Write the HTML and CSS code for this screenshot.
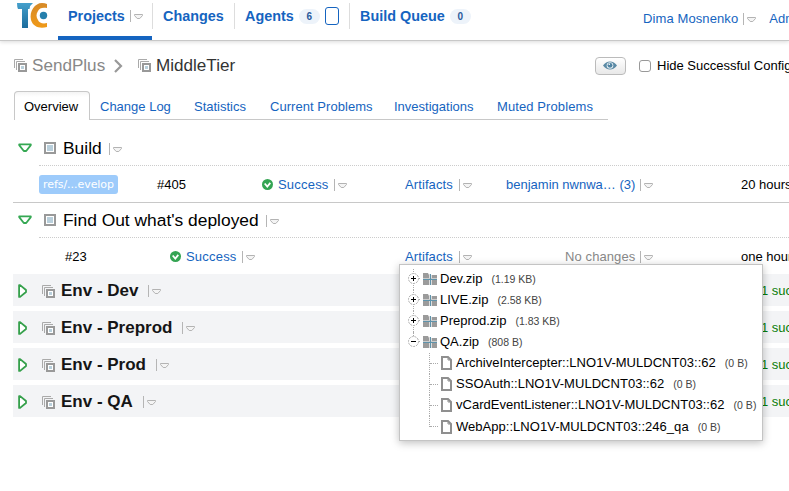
FILE: index.html
```html
<!DOCTYPE html>
<html lang="en">
<head>
    <meta charset="UTF-8">
    <meta name="viewport" content="width=device-width, initial-scale=1.0">
    <title>MiddleTier - Overview</title>
    <link rel="stylesheet" href="styles.css">
</head>
<body>
    <!-- Shared icons -->
    <svg class="sprite" aria-hidden="true">
        <symbol id="menu" viewBox="0 0 13 12">
            <path d="M.5 0v12" stroke="#b5b5b5"/>
            <path d="M4.5 4.5h8v1L9.8 8.5H7.2L4.5 5.5z" fill="#f4f4f4" stroke="#b3b3b3" stroke-linejoin="round"/>
        </symbol>
        <symbol id="project" viewBox="0 0 13 13">
            <path d="M.5 9V.5H9M2.5 11V2.5H11" fill="none" stroke="#aaa"/>
            <path d="M5 5h7v7H5z" fill="#fff" stroke="#999" stroke-width="2"/>
            <path d="M7 7h3v3H7z" fill="#b9d0dc"/>
        </symbol>
        <symbol id="config" viewBox="0 0 12 12">
            <path d="M1 1h10v10H1z" fill="#fff" stroke="#999" stroke-width="2"/>
            <path d="M3 3h6v6H3z" fill="#b9cfdb"/>
        </symbol>
        <symbol id="open" viewBox="0 0 14 10">
            <path d="M1.2 1.3h11.6v.8L8.2 8H5.8L1.2 2.1z" fill="#fff" stroke="#35a853" stroke-width="1.8" stroke-linejoin="round"/>
        </symbol>
        <symbol id="closed" viewBox="0 0 10 14">
            <path d="M1.1 1.1h1L8 6v2l-5.9 4.9h-1z" fill="#fff" stroke="#35a04b" stroke-width="1.8" stroke-linejoin="round"/>
        </symbol>
        <symbol id="ok" viewBox="0 0 11 11">
            <circle cx="5.5" cy="5.5" r="5.5" fill="#34a453"/>
            <path d="M2.7 4.5l2.6 3 3-3.6" fill="none" stroke="#fff" stroke-width="1.8"/>
        </symbol>
        <symbol id="plus" viewBox="0 0 12 12">
            <circle cx="5.5" cy="5.5" r="5" fill="#fff" stroke="#aaa" stroke-dasharray="2 1"/>
            <path d="M3 5.5h5M5.5 3v5" stroke="#000"/>
            <path d="M11 5.5h1" stroke="#aaa"/>
        </symbol>
        <symbol id="minus" viewBox="0 0 12 12">
            <circle cx="5.5" cy="5.5" r="5" fill="#fff" stroke="#aaa" stroke-dasharray="2 1"/>
            <path d="M3 5.5h5" stroke="#000"/>
            <path d="M11 5.5h1" stroke="#aaa"/>
        </symbol>
        <symbol id="zip" viewBox="0 0 14 12">
            <path d="M0 0h5l1 2h8v10H0z" fill="#9b9b9b"/>
            <path d="M6.5 1v11M8.5 2v10" stroke="#ddd"/>
            <path d="M0 5.5h14" stroke="#ccc"/>
            <path d="M0 6.5h14M7.5 1v11" stroke="#5f93ab"/>
        </symbol>
        <symbol id="file" viewBox="0 0 11 14">
            <path d="M1 1h6l3 3v9H1z" fill="#fff" stroke="#8f8f8f" stroke-width="2"/>
            <path d="M7 1v3h3" fill="none" stroke="#8f8f8f"/>
        </symbol>
    </svg>

    <header class="header">
        <svg class="logo" viewBox="0 0 32 26">
            <defs>
                <linearGradient id="blue" x2="0" y2="1">
                    <stop offset="0" stop-color="#45a0cc"/>
                    <stop offset="1" stop-color="#1b6c9c"/>
                </linearGradient>
                <linearGradient id="orange" x2="0" y2="1">
                    <stop offset="0" stop-color="#d68a28"/>
                    <stop offset="1" stop-color="#f09a18"/>
                </linearGradient>
            </defs>
            <path d="M0 0h16q-3 2-3.500 6H11v19H5V6H1Q0 4 0 0z" fill="url(#blue)"/>
            <path d="M30 1v4c-4-1-8 0-9 3-2 3-2 6 0 9 1 3 5 4 9 3v4c-7 2-14 0-16-7-2-9 4-17 11-17q3 0 5 1z" fill="url(#orange)"/>
            <circle cx="26.500" cy="12.500" r="3.700" fill="#257fac"/>
        </svg>
        <nav class="nav">
            <div class="nav-item projects active"><a>Projects</a><svg class="menu"><use href="#menu"/></svg></div>
            <div class="nav-item changes"><a>Changes</a></div>
            <div class="nav-item agents"><a>Agents</a><span class="badge">6</span><span class="agent-box"></span></div>
            <div class="nav-item queue"><a>Build Queue</a><span class="badge">0</span></div>
        </nav>
        <div class="user"><a>Dima Mosnenko</a><svg class="menu"><use href="#menu"/></svg><a class="admin">Administration</a></div>
    </header>

    <div class="breadcrumbs">
        <svg class="project"><use href="#project"/></svg>
        <span class="crumb parent">SendPlus</span>
        <svg class="chevron" viewBox="0 0 9 14"><path d="M1 1l6 6-6 6" fill="none" stroke="#999" stroke-width="2.2"/></svg>
        <svg class="project"><use href="#project"/></svg>
        <span class="crumb">MiddleTier</span>
        <div class="actions">
            <button class="eye">
                <svg viewBox="0 0 14 9"><path d="M0 4.5Q3 .5 7 .5t7 4Q11 8.5 7 8.5T0 4.5z" fill="#5b8aa5"/><circle cx="7" cy="4.5" r="3.3" fill="#dfe9ee"/><circle cx="7" cy="4.3" r="2.4" fill="#4f83a2"/><circle cx="6.3" cy="3.3" r=".8" fill="#fff"/></svg>
            </button>
            <span class="checkbox"></span>
            <span>Hide Successful Configurations</span>
        </div>
    </div>

    <div class="tabs">
        <span class="tab current">Overview</span>
        <a class="tab changelog">Change Log</a>
        <a class="tab statistics">Statistics</a>
        <a class="tab problems">Current Problems</a>
        <a class="tab investigations">Investigations</a>
        <a class="tab muted">Muted Problems</a>
    </div>

    <main class="content">
        <section class="build-type">
            <div class="title">
                <svg class="open"><use href="#open"/></svg>
                <svg class="config"><use href="#config"/></svg>
                <span class="name">Build</span>
                <svg class="menu"><use href="#menu"/></svg>
            </div>
            <div class="build">
                <div class="col-branch"><span class="branch">refs/...evelop</span></div>
                <div class="col-number">#405</div>
                <div class="col-status"><svg class="ok"><use href="#ok"/></svg><a>Success</a><svg class="menu"><use href="#menu"/></svg></div>
                <div class="col-artifacts"><a>Artifacts</a><svg class="menu"><use href="#menu"/></svg></div>
                <div class="col-changes"><a>benjamin nwnwa… (3)</a><svg class="menu"><use href="#menu"/></svg></div>
                <div class="col-time">20 hours ago</div>
            </div>
        </section>

        <section class="build-type">
            <div class="title">
                <svg class="open"><use href="#open"/></svg>
                <svg class="config"><use href="#config"/></svg>
                <span class="name find">Find Out what's deployed</span>
                <svg class="menu"><use href="#menu"/></svg>
            </div>
            <div class="build no-branch">
                <div class="col-number">#23</div>
                <div class="col-status"><svg class="ok"><use href="#ok"/></svg><a>Success</a><svg class="menu"><use href="#menu"/></svg></div>
                <div class="col-artifacts">
                    <a>Artifacts</a><svg class="menu"><use href="#menu"/></svg>
                    <div class="popup">
                        <div class="node"><svg class="toggle"><use href="#plus"/></svg><svg class="zip"><use href="#zip"/></svg><span>Dev.zip</span><small>(1.19 KB)</small></div>
                        <div class="node"><svg class="toggle"><use href="#plus"/></svg><svg class="zip"><use href="#zip"/></svg><span>LIVE.zip</span><small>(2.58 KB)</small></div>
                        <div class="node"><svg class="toggle"><use href="#plus"/></svg><svg class="zip"><use href="#zip"/></svg><span>Preprod.zip</span><small>(1.83 KB)</small></div>
                        <div class="node last"><svg class="toggle"><use href="#minus"/></svg><svg class="zip"><use href="#zip"/></svg><span>QA.zip</span><small>(808 B)</small></div>
                        <div class="leaf"><svg class="file"><use href="#file"/></svg><span>ArchiveIntercepter::LNO1V-MULDCNT03::62</span><small>(0 B)</small></div>
                        <div class="leaf"><svg class="file"><use href="#file"/></svg><span>SSOAuth::LNO1V-MULDCNT03::62</span><small>(0 B)</small></div>
                        <div class="leaf"><svg class="file"><use href="#file"/></svg><span>vCardEventListener::LNO1V-MULDCNT03::62</span><small>(0 B)</small></div>
                        <div class="leaf last"><svg class="file"><use href="#file"/></svg><span>WebApp::LNO1V-MULDCNT03::246_qa</span><small>(0 B)</small></div>
                    </div>
                </div>
                <div class="col-changes none"><span>No changes</span><svg class="menu"><use href="#menu"/></svg></div>
                <div class="col-time">one hour ago</div>
            </div>
        </section>

        <div class="subprojects">
            <div class="subproject">
                <svg class="closed"><use href="#closed"/></svg><svg class="project"><use href="#project"/></svg>
                <span class="env">Env - Dev</span><svg class="menu"><use href="#menu"/></svg>
                <span class="summary">1 successful</span>
            </div>
            <div class="subproject">
                <svg class="closed"><use href="#closed"/></svg><svg class="project"><use href="#project"/></svg>
                <span class="env">Env - Preprod</span><svg class="menu"><use href="#menu"/></svg>
                <span class="summary">1 successful</span>
            </div>
            <div class="subproject">
                <svg class="closed"><use href="#closed"/></svg><svg class="project"><use href="#project"/></svg>
                <span class="env">Env - Prod</span><svg class="menu"><use href="#menu"/></svg>
                <span class="summary">1 successful</span>
            </div>
            <div class="subproject">
                <svg class="closed"><use href="#closed"/></svg><svg class="project"><use href="#project"/></svg>
                <span class="env">Env - QA</span><svg class="menu"><use href="#menu"/></svg>
                <span class="summary">1 successful</span>
            </div>
        </div>
    </main>
</body>
</html>
```

FILE: styles.css
```css
* {
    box-sizing: border-box;
}

body {
    margin: 0;
    height: 491px;
    overflow: hidden;
    background: #fff;
    color: #000;
    font: 13px/16px "Liberation Sans", Arial, sans-serif;
    white-space: nowrap;
}

a {
    color: #1564c0;
}

svg {
    display: block;
    flex: none;
}

.sprite {
    display: none;
}

/* Icon sizes */
.menu {
    width: 13px;
    height: 12px;
    margin-left: 5px;
}

.project {
    width: 13px;
    height: 13px;
}

.config {
    width: 12px;
    height: 12px;
}

.open {
    width: 14px;
    height: 10px;
}

.closed {
    width: 10px;
    height: 14px;
}

.ok {
    width: 11px;
    height: 11px;
}

/* Header */
.header {
    display: flex;
    height: 41px;
    border-bottom: 1px solid #c8c8c8;
    box-shadow: 0 1px 4px rgba(0, 0, 0, 0.15);
}

.logo {
    width: 32px;
    height: 26px;
    margin: 3px 9px 0 17px;
}

.nav {
    display: flex;
    font-size: 14.4px;
    font-weight: bold;
}

.nav-item {
    position: relative;
    display: flex;
    align-items: center;
    height: 40px;
    padding: 0 0 8px 10px;
}

/* Divider between the items */
.nav-item:not(.queue)::after {
    content: "";
    position: absolute;
    right: -1px;
    top: 3px;
    width: 1px;
    height: 26px;
    background: #ddd;
}

.projects {
    width: 94px;
    padding-bottom: 4px;
    border-bottom: 4px solid #1564c0;
}

.projects .menu {
    margin-left: auto;
    margin-right: 9px;
}

.changes {
    width: 82px;
    padding-left: 11px;
}

.agents {
    width: 115px;
    padding-left: 11px;
}

.queue {
    padding-left: 11px;
}

.badge {
    width: 21px;
    height: 15px;
    margin-left: 5px;
    border-radius: 8px;
    background: #edf3fa;
    color: #2a5a9c;
    font-size: 10px;
    line-height: 15px;
    text-align: center;
}

.agent-box {
    width: 14px;
    height: 18px;
    margin-left: 5px;
    border: 1px solid #1564c0;
    border-radius: 3px;
}

.user {
    display: flex;
    align-items: center;
    width: 146px;
    height: 38px;
    margin-left: auto;
    overflow: hidden;
}

.user a {
    letter-spacing: 0.1px;
}

.admin {
    margin-left: 13px;
}

/* Breadcrumbs */
.breadcrumbs {
    display: flex;
    align-items: center;
    height: 49px;
    padding-left: 14px;
}

.crumb {
    margin-left: 5px;
    color: #333;
    font-size: 17.1px;
    line-height: 20px;
}

.crumb.parent {
    width: 72px;
    color: #888;
}

.chevron {
    width: 9px;
    height: 14px;
    margin: 0 15px 0 10px;
}

.actions {
    display: flex;
    align-items: center;
    width: 194px;
    margin-left: auto;
    overflow: hidden;
}

.eye {
    flex: none;
    width: 31px;
    height: 18px;
    padding: 0 0 0 7px;
    border: 1px solid #bbb;
    border-radius: 4px;
    background: linear-gradient(#fff, #e8e8e8);
}

.eye svg {
    width: 14px;
    height: 9px;
}

.checkbox {
    flex: none;
    width: 12px;
    height: 12px;
    margin: 0 6px 0 13px;
    border: 1px solid #999;
    border-radius: 3px;
}

/* Tabs */
.tabs {
    display: flex;
    width: 594px;
    height: 29px;
    margin: 1px 0 0 14px;
    border-bottom: 1px solid #c8c8c8;
}

.tab {
    padding-top: 8px;
}

.current {
    width: 76px;
    height: 29px;
    padding: 7px 0 0 9px;
    border: 1px solid #c8c8c8;
    border-bottom: 0;
    border-radius: 4px 4px 0 0;
    background: linear-gradient(#f4f4f4, #fff 5px);
}

.changelog {
    width: 104px;
    padding-left: 10px;
}

.statistics {
    width: 76px;
}

.problems {
    width: 124px;
    letter-spacing: 0.05px;
}

.investigations {
    width: 103px;
}

.muted {
    letter-spacing: 0.1px;
}

/* Build configurations */
.content {
    margin-left: 13px;
    padding-top: 10px;
}

.build-type {
    height: 73px;
    border-bottom: 1px solid #c8c8c8;
}

.build-type + .build-type {
    height: 71px;
    border-bottom: 0;
}

.title {
    display: flex;
    align-items: center;
    height: 35px;
    padding-left: 5px;
}

.build-type + .build-type .title {
    height: 34px;
}

.title .config {
    margin: 0 7px 0 12px;
}

.title .menu {
    margin-left: 6px;
    margin-top: 2px;
}

.name {
    width: 40px;
    font-size: 17.4px;
    line-height: 20px;
}

.name.find {
    width: 197px;
}

.build {
    display: flex;
    align-items: center;
    height: 38px;
    margin-left: 26px;
    border-top: 1px dotted #ccc;
}

.build > div {
    display: flex;
    flex: none;
    align-items: center;
}

.col-branch {
    width: 118px;
}

.branch {
    width: 79px;
    height: 19px;
    border-radius: 3px;
    background: #9dcbfb;
    color: #fff;
    font: 11px/19px "DejaVu Sans", sans-serif;
    text-align: center;
    letter-spacing: -0.05px;
}

.col-number {
    width: 105px;
}

.col-status {
    width: 143px;
}

.col-status a {
    width: 51px;
    letter-spacing: 0.2px;
}

.col-status .ok {
    margin-right: 5px;
}

.no-branch .col-number {
    width: 131px;
    padding-left: 26px;
}

.no-branch .col-status {
    width: 235px;
}

.col-artifacts {
    position: relative;
    width: 101px;
}

.col-artifacts > a {
    width: 49px;
    letter-spacing: 0.1px;
}

.col-changes {
    width: 235px;
}

.col-changes.none {
    padding-left: 59px;
    color: #888;
    letter-spacing: 0.1px;
}

/* Artifacts popup */
.popup {
    position: absolute;
    z-index: 2;
    left: -6px;
    top: 15px;
    width: 364px;
    height: 177px;
    padding: 4px 0 0 8px;
    border: 1px solid #c4c4c4;
    background: #fff;
    box-shadow: 0 2px 8px rgba(0, 0, 0, 0.25);
}

.popup small {
    margin-left: 9px;
    color: #444;
    font-size: 10.5px;
}

.node,
.leaf {
    position: relative;
    display: flex;
    align-items: center;
    height: 21px;
}

.leaf {
    height: 21.2px;
    padding-left: 33px;
    letter-spacing: 0.03px;
}

.node::before {
    content: "";
    position: absolute;
    left: 5px;
    top: 0;
    height: 21px;
    border-left: 1px dotted #aaa;
}

.node.last::before {
    height: 6px;
}

.toggle {
    position: relative;
    width: 12px;
    height: 12px;
}

.zip {
    width: 14px;
    height: 12px;
    margin: 0 3px;
}

.file {
    width: 11px;
    height: 14px;
    margin-right: 4px;
}

/* Tree line from the folder to its files */
.leaf::before {
    content: "";
    position: absolute;
    left: 21px;
    top: 0;
    height: 21px;
    border-left: 1px dotted #aaa;
}

.leaf.last::before {
    height: 11px;
}

.leaf::after {
    content: "";
    position: absolute;
    left: 22px;
    top: 10px;
    width: 8px;
    border-top: 1px dotted #aaa;
}

/* Collapsed subprojects */
.subprojects {
    display: flex;
    flex-direction: column;
    gap: 5px;
}

.subproject {
    display: flex;
    align-items: center;
    height: 32px;
    padding-left: 5px;
    overflow: hidden;
    background: #f3f4f6;
}

.subproject .closed {
    margin-top: 2px;
}

.subproject .project {
    margin: 3px 6px 0 14px;
}

.env {
    padding-top: 1px;
    color: #151515;
    font-size: 17px;
    font-weight: bold;
    line-height: 20px;
}

.subproject .menu {
    margin: 2px 0 0 10px;
}

.summary {
    width: 28px;
    margin-left: auto;
    padding-top: 1px;
    overflow: hidden;
    color: #087d08;
}
```
